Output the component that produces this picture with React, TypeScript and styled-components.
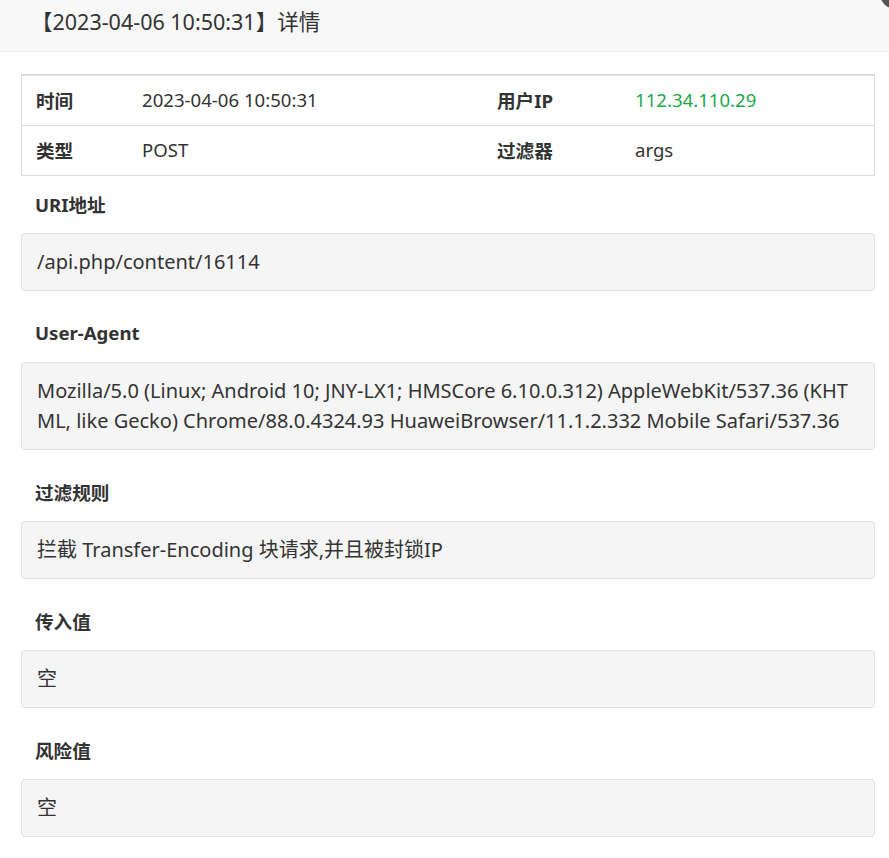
import React from "react";
import styled, { createGlobalStyle } from "styled-components";

const Global = createGlobalStyle`
  html, body { margin: 0; padding: 0; background: #fff; }
  body { font-family: "Noto Sans", "Noto Sans CJK SC", sans-serif; color: #333; overflow: hidden; }
  * { box-sizing: border-box; }
`;

const Modal = styled.div`
  position: relative;
  width: 889px;
  height: 858px;
  background: #fff;
  overflow: hidden;
`;

const Header = styled.div`
  height: 52px;
  background: #f8f8f8;
  border-bottom: 1px solid #eee;
  display: flex;
  align-items: center;
  padding-left: 31px;
  padding-bottom: 10px;
  font-size: 21.5px;
  color: #333;
`;

const CloseDot = styled.div`
  position: absolute;
  top: -22px;
  right: -22px;
  width: 31px;
  height: 31px;
  border-radius: 50%;
  background: #555;
`;

const Body = styled.div`
  padding: 22px 14px 0 21px;
  display: flex;
  flex-direction: column;
`;

const Table = styled.div`
  display: grid;
  grid-template-columns: 106px 355px 138px 1fr;
  border: 1px solid #ddd;
  border-top-width: 2px;
`;

const Cell = styled.div<{ $label?: boolean; $last?: boolean }>`
  height: ${(p) => (p.$last ? 49 : 50)}px;
  display: flex;
  align-items: center;
  padding: 0 14px 3px;
  font-size: 18.6px;
  font-weight: ${(p) => (p.$label ? 700 : 400)};
  color: #333;
  border-bottom: ${(p) => (p.$last ? "none" : "1px solid #ddd")};
`;

const Label = styled.div`
  height: 57px;
  display: flex;
  align-items: center;
  padding: 0 0 2px 14px;
  font-size: 18.6px;
  font-weight: 700;
  color: #333;
`;

const Box = styled.div`
  background: #f5f5f5;
  border: 1px solid #e2e2e2;
  border-radius: 4px;
  padding: 13px 12px 13px 15px;
  font-size: 20px;
  line-height: 30px;
  color: #333;
  margin-bottom: 14px;
  word-break: break-all;
`;

const GreenText = styled.span`
  color: #1ea84a;
`;

export default function App() {
  const sections = [
    { label: "URI地址", value: "/api.php/content/16114" },
    {
      label: "User-Agent",
      value:
        "Mozilla/5.0 (Linux; Android 10; JNY-LX1; HMSCore 6.10.0.312) AppleWebKit/537.36 (KHTML, like Gecko) Chrome/88.0.4324.93 HuaweiBrowser/11.1.2.332 Mobile Safari/537.36",
    },
    { label: "过滤规则", value: "拦截 Transfer-Encoding 块请求,并且被封锁IP" },
    { label: "传入值", value: "空" },
    { label: "风险值", value: "空" },
  ];
  return (
    <>
      <Global />
      <Modal>
        <Header>【2023-04-06 10:50:31】详情</Header>
        <CloseDot />
        <Body>
          <Table>
            <Cell $label>时间</Cell>
            <Cell>2023-04-06 10:50:31</Cell>
            <Cell $label>用户IP</Cell>
            <Cell>
              <GreenText>112.34.110.29</GreenText>
            </Cell>
            <Cell $label $last>类型</Cell>
            <Cell $last>POST</Cell>
            <Cell $label $last>过滤器</Cell>
            <Cell $last>args</Cell>
          </Table>
          {sections.map((s) => (
            <React.Fragment key={s.label}>
              <Label>{s.label}</Label>
              <Box>{s.value}</Box>
            </React.Fragment>
          ))}
        </Body>
      </Modal>
    </>
  );
}
